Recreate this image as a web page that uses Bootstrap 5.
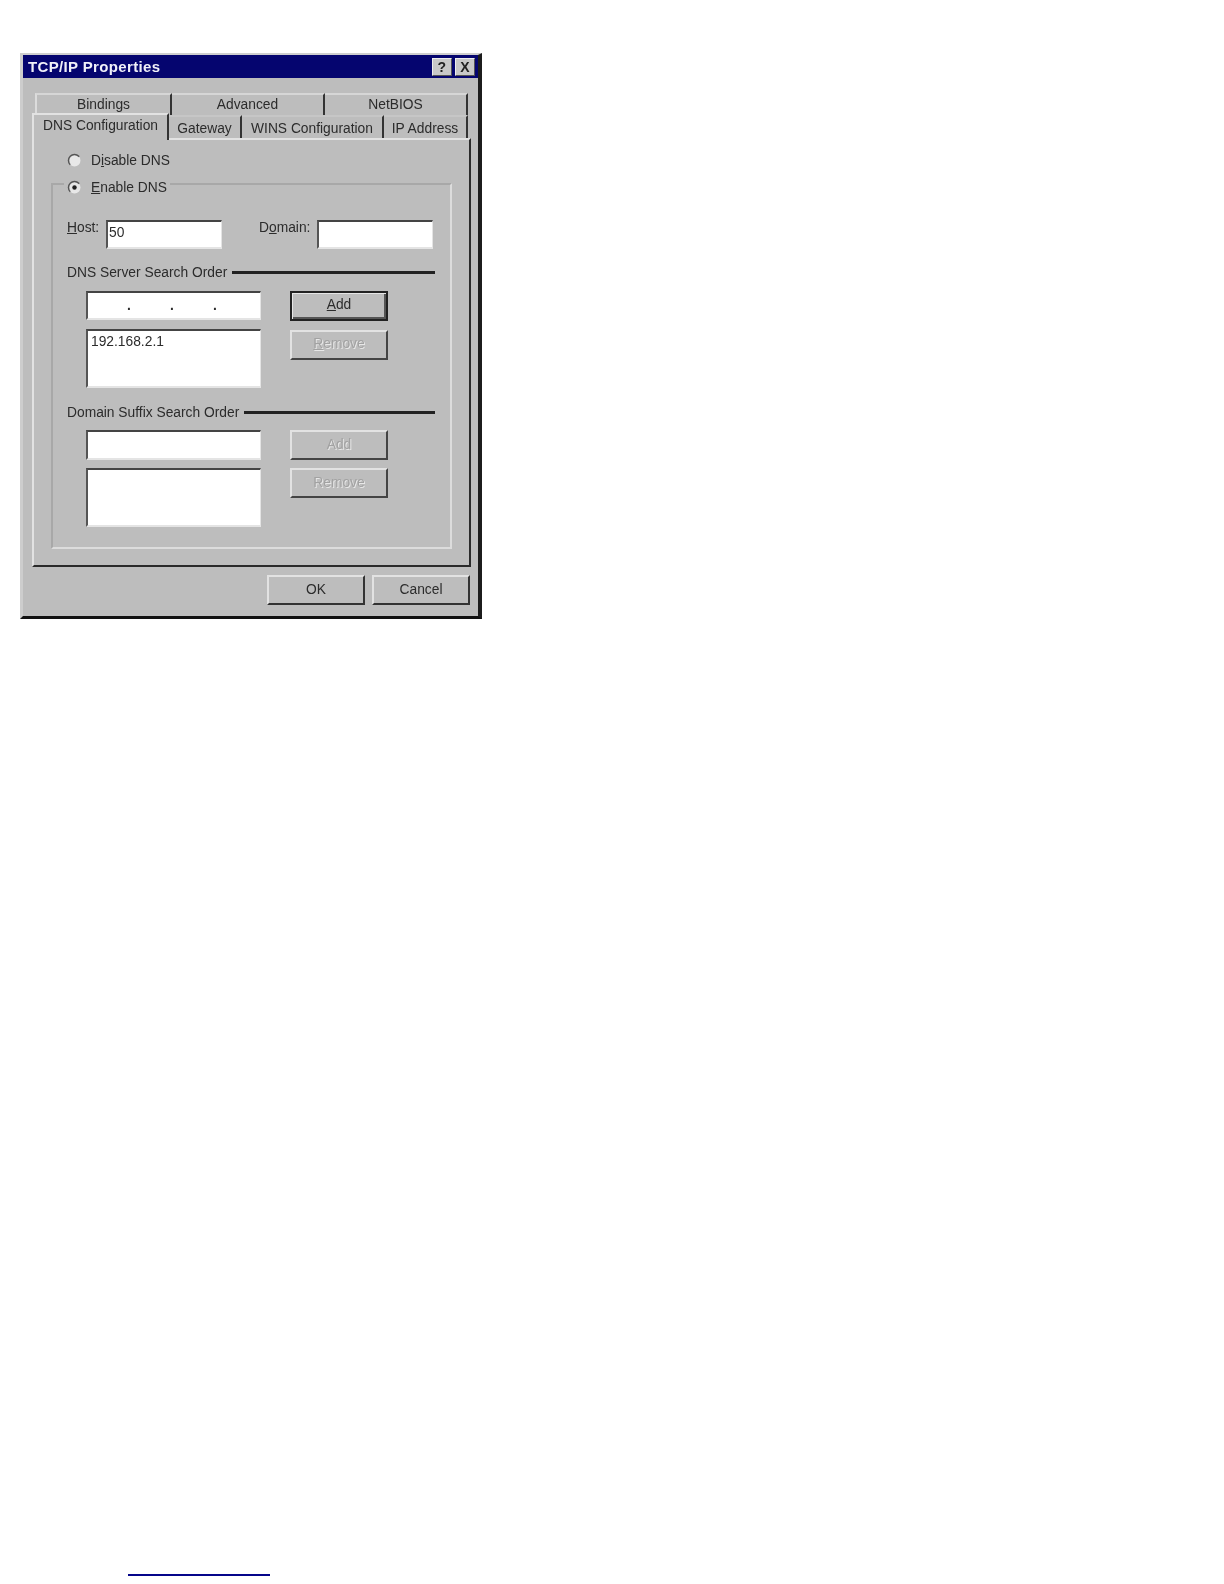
<!DOCTYPE html>
<html lang="en">
<head>
<meta charset="utf-8">
<title>TCP/IP Properties</title>
<link href="https://cdn.jsdelivr.net/npm/bootstrap@5.3.0/dist/css/bootstrap.min.css" rel="stylesheet">
<style>
html,body{background:#fff;margin:0;height:1584px;overflow:hidden}
body{font-family:"Liberation Sans",Arial,sans-serif;font-size:13.8px;line-height:16px;color:#2c2c2c}
.dlg{box-sizing:border-box;width:462px;height:566px;margin:53px 0 0 20px;background:#bdbdbd;
  border-top:2px solid #cfcfcf;border-left:3px solid #cdcdcd;border-right:4px solid #1c1c1c;border-bottom:3px solid #111;filter:blur(.75px)}
.titlebar{height:23px;background:#05056f;color:#f0f0f8;font-weight:700;font-size:15px;padding:0 3px 0 5px;letter-spacing:.35px}
.capbtn{width:20px;height:18px;background:#c8c8c8;color:#222;font-size:14px;line-height:16px;text-align:center;border-top:1px solid #eee;border-left:1px solid #eee;border-right:1px solid #555;border-bottom:1px solid #555}
.capgap{gap:3px}
.tabs-back{margin:15px 0 0 12px;width:433px;height:22px}
.tabs-front{margin:0 0 0 9px;width:439px;height:23px}
.tabk{box-sizing:border-box;text-align:center;background:#bdbdbd;border-top:2px solid #d6d6d6;border-right:2px solid #333;padding-top:2px;height:100%}
.tabs-front .tabk{border-top-color:#c6c6c6;padding-top:4px}
.tabk.first{border-left:2px solid #dcdcdc}
.tabs-front .tabk.lift{height:27px;margin-top:-2px;margin-bottom:-2px;border-right:2px solid #333;border-left:2px solid #e2e2e2;border-top-color:#e2e2e2;padding-top:3px;position:relative;z-index:2;flex:none}
.w1{width:137px}.w2{width:153px}.w3{width:143px}
.w4{width:137px}.w5{width:73px}.w6{width:142px}.w7{width:84px}
.pane{box-sizing:border-box;width:439px;height:429px;margin-left:9px;border-top:2px solid #e2e2e2;border-left:2px solid #e2e2e2;border-right:2px solid #2a2a2a;border-bottom:2px solid #2a2a2a;padding:13px 0 0 33px}
.rad{width:15px;height:15px;flex:none}
.radlabel{height:15px;gap:9px}
.grp{box-sizing:border-box;width:401px;margin:12px 0 0 -16px;padding:0;border:2px solid;border-color:#a8a8a8 #dcdcdc #dcdcdc #a8a8a8}
.grp legend{float:none;width:auto;height:8px;margin:0 0 0 11px;padding:0 3px;font-size:inherit;line-height:16px;background:#bdbdbd;overflow:visible}
.grpin{padding:32px 0 20px 14px;width:382px}
.sunk.form-control{box-sizing:border-box;border-radius:0;background:#fff;color:#2c2c2c;font-size:13.8px;line-height:16px;padding:2px 1px;min-height:0;height:29px;
  border-style:solid;border-width:2px 1px 2px 2px;border-color:#444 #e4e4e4 #e4e4e4 #555}
input.sunk.form-control{padding-bottom:6px}
.sunk.hi30{height:30px}
.sunk.lst{height:59px;padding:3px 3px}
.sunk.ip{padding:5px 4px 0 0;justify-content:space-evenly;font-weight:700}
.w116{width:116px;flex:none}
.w175{width:175px}
.hostlbl{width:39px;flex:none}
.domlbl{width:58px;margin-left:37px;flex:none}
.rulehead{height:16px;gap:5px;width:368px}
.rulehead span{padding-top:1px}
.rulehead i{display:block;height:3px;background:#222;flex:1 1 auto;margin-top:1px}
.mt15{margin-top:15px}.mt16{margin-top:16px}.mt11{margin-top:11px}.mt10{margin-top:10px}
.indent{margin-left:19px;gap:29px}
.gap9{gap:9px}.gap8{gap:8px}
.wb.btn{box-sizing:border-box;width:98px;height:30px;padding:0;border-radius:0;background:#bdbdbd;color:#2c2c2c;font-size:13.8px;line-height:16px;
  border-style:solid;border-width:2px;border-color:#e2e2e2 #333 #333 #e2e2e2;--bs-btn-disabled-opacity:1}
.wb.def{border-color:#222;border-width:2px;box-shadow:inset 1px 1px 0 #e6e6e6,inset -2px -2px 0 #555;padding-bottom:3px}
.wb.btn:disabled{color:#a2a2a2;background:#bdbdbd;border-color:#e2e2e2 #444 #444 #e2e2e2;text-shadow:1px 1px 0 #e8e8e8;padding-bottom:2px}
.wb.btn.low:disabled{padding-bottom:0}
.actions{gap:7px;margin-top:8px;width:447px}
.footrule{width:142px;height:2px;background:#05058a;margin:955px 0 0 128px}
</style>
</head>
<body>
<div class="dlg">
  <div class="titlebar d-flex align-items-center justify-content-between">
    <span>TCP/IP Properties</span>
    <span class="d-flex capgap"><span class="capbtn fw-bold">?</span><span class="capbtn fw-bold">X</span></span>
  </div>
  <div class="tabs-back d-flex">
    <div class="tabk first w1">Bindings</div><div class="tabk w2">Advanced</div><div class="tabk w3">NetBIOS</div>
  </div>
  <div class="tabs-front d-flex align-items-start">
    <div class="tabk lift w4">DNS Configuration</div><div class="tabk w5">Gateway</div><div class="tabk w6">WINS Configuration</div><div class="tabk w7">IP Address</div>
  </div>
  <div class="pane">
    <div class="radlabel d-flex align-items-center">
      <svg class="rad" viewBox="0 0 15 15"><circle cx="7.5" cy="7.5" r="6" fill="#e8e8e8" stroke="#555" stroke-width="1.5" stroke-dasharray="19 19" transform="rotate(135 7.5 7.5)"/></svg>
      <span>D<u>i</u>sable DNS</span>
    </div>
    <fieldset class="grp">
      <legend>
        <span class="radlabel d-flex align-items-center">
          <svg class="rad" viewBox="0 0 15 15"><circle cx="7.5" cy="7.5" r="6" fill="#e8e8e8" stroke="#555" stroke-width="1.5" stroke-dasharray="19 19" transform="rotate(135 7.5 7.5)"/><circle cx="7.5" cy="7.5" r="2.2" fill="#222"/></svg>
          <span><u>E</u>nable DNS</span>
        </span>
      </legend>
      <div class="grpin">
        <div class="d-flex align-items-start">
          <span class="hostlbl"><u>H</u>ost:</span>
          <input class="sunk form-control w116" value="50" aria-label="Host">
          <span class="domlbl">D<u>o</u>main:</span>
          <input class="sunk form-control w116" aria-label="Domain">
        </div>
        <div class="rulehead d-flex align-items-center mt15"><span class="text-nowrap">DNS Server Search Order</span><i></i></div>
        <div class="d-flex indent mt11">
          <div class="d-flex flex-column gap9 w175">
            <div class="sunk form-control ip d-flex"><span>.</span><span>.</span><span>.</span></div>
            <div class="sunk form-control lst">192.168.2.1</div>
          </div>
          <div class="d-flex flex-column gap9">
            <button type="button" class="wb btn def"><u>A</u>dd</button>
            <button type="button" class="wb btn" disabled><u>R</u>emove</button>
          </div>
        </div>
        <div class="rulehead d-flex align-items-center mt16"><span class="text-nowrap">Domain Suffix Search Order</span><i></i></div>
        <div class="d-flex indent mt10">
          <div class="d-flex flex-column gap8 w175">
            <div class="sunk form-control hi30"></div>
            <div class="sunk form-control lst"></div>
          </div>
          <div class="d-flex flex-column gap8">
            <button type="button" class="wb btn low" disabled>Add</button>
            <button type="button" class="wb btn low" disabled>Remove</button>
          </div>
        </div>
      </div>
    </fieldset>
  </div>
  <div class="actions d-flex justify-content-end">
    <button type="button" class="wb btn">OK</button>
    <button type="button" class="wb btn">Cancel</button>
  </div>
</div>
<div class="footrule"></div>
<script src="https://cdn.jsdelivr.net/npm/bootstrap@5.3.0/dist/js/bootstrap.bundle.min.js"></script>
</body>
</html>
